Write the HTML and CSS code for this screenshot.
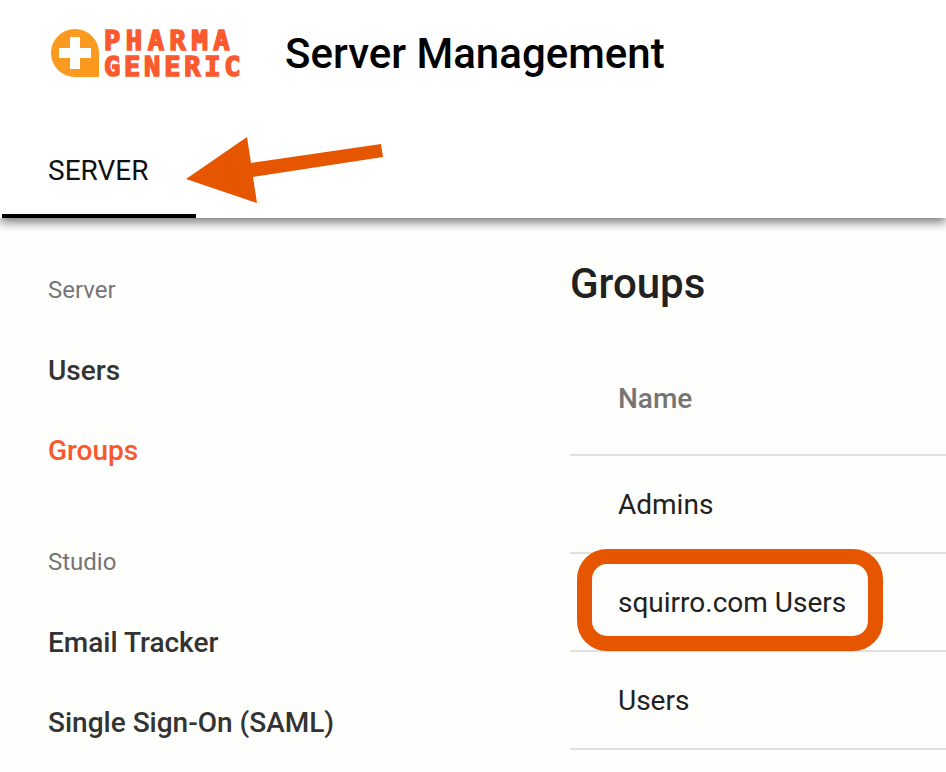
FILE: index.html
```html
<!DOCTYPE html>
<html lang="en">
<head>
<meta charset="utf-8">
<title>Server Management</title>
<link rel="stylesheet" href="styles.css">
</head>
<body>
<div class="page">
  <header class="header">
    <div class="brand-row">
      <div class="logo">
        <svg class="logo-mark" width="48" height="48" viewBox="0 0 48 48"><path d="M24 0a24 24 0 0 0 0 48h24V24A24 24 0 0 0 24 0z" fill="#fb9a1e"/><path d="M19 8h10v11h11v10H29v11H19V29H8V19h11z" fill="#fff"/></svg>
        <div class="logo-text"><span class="logo-line line-one">PHARMA</span><span class="logo-line line-two">GENERIC</span></div>
      </div>
      <h1 class="title">Server Management</h1>
    </div>
    <nav class="tabs"><a class="tab">SERVER</a></nav>
  </header>
  <main class="main">
    <aside class="sidebar">
      <div class="nav-group">
        <div class="nav-label">Server</div>
        <div class="nav-item">Users</div>
        <div class="nav-item active">Groups</div>
      </div>
      <div class="nav-group">
        <div class="nav-label">Studio</div>
        <div class="nav-item">Email Tracker</div>
        <div class="nav-item">Single Sign-On (SAML)</div>
      </div>
    </aside>
    <section class="content">
      <h2 class="heading">Groups</h2>
      <div class="table">
        <div class="row head">Name</div>
        <div class="row">Admins</div>
        <div class="row">squirro.com Users</div>
        <div class="row">Users</div>
      </div>
    </section>
  </main>
  <svg class="arrow" width="200" height="75" viewBox="0 0 200 75"><polygon points="1,49 62,7 66,33 196,14 198,27 68,47 72,73" fill="#e65500"/></svg>
  <div class="highlight"></div>
</div>
</body>
</html>
```
FILE: styles.css
```css
* { box-sizing: border-box; }
html, body { margin: 0; height: 100%; }
body { font-family: Roboto, "Liberation Sans", sans-serif; background: #fefefc; overflow: hidden; }
.page { position: relative; width: 946px; height: 772px; overflow: hidden; }
.header { height: 218px; background: #fff; box-shadow: 0 4px 10px rgba(0,0,0,.55); position: relative; }
.brand-row { height: 106px; display: flex; align-items: center; padding-left: 51px; }
.logo { display: flex; align-items: center; gap: 5px; width: 234px; }
.logo-mark { flex: none; }
.logo-text { display: flex; flex-direction: column; padding-top: 2px; font-family: "DejaVu Sans Mono", monospace; font-weight: 700; color: #fb5a2e; line-height: 24px; font-size: 27px; -webkit-text-stroke: 1.6px #fb5a2e; white-space: nowrap; }
.logo-line { display: block; }
.line-one { letter-spacing: 5.600px; }
.line-two { letter-spacing: 3.800px; margin-top: 2px; }
.title { margin: 0; font-size: 42px; font-weight: 500; color: #000; white-space: nowrap; }
.tabs { display: flex; padding-left: 2px; }
.tab { width: 194px; height: 112px; border-bottom: 4px solid #000; padding-top: 48px; padding-left: 46px; font-size: 28px; color: #111; line-height: 34px; }
.main { display: flex; }
.sidebar { width: 570px; padding: 56px 0 0 48px; flex: none; }
.nav-group { padding-bottom: 31px; }
.nav-label { font-size: 24px; line-height: 32px; color: #757575; margin-bottom: 49px; }
.nav-item { font-size: 28px; font-weight: 500; line-height: 32px; color: #333; margin-bottom: 48px; }
.nav-item.active { color: #f9572c; }
.content { flex: 1; padding-top: 43px; }
.heading { margin: 0; font-size: 42px; font-weight: 500; line-height: 46px; color: #212121; }
.table { margin-top: 33px; }
.row { height: 98px; border-bottom: 2px solid #e0e0e0; display: flex; align-items: center; padding-left: 48px; font-size: 28px; color: #212121; }
.row.head { height: 116px; padding-top: 2px; color: #757575; font-weight: 500; }
.arrow { position: absolute; left: 185px; top: 130px; }
.highlight { position: absolute; left: 577px; top: 549px; width: 306px; height: 102px; border: 15px solid #e65500; border-radius: 30px; }
```
